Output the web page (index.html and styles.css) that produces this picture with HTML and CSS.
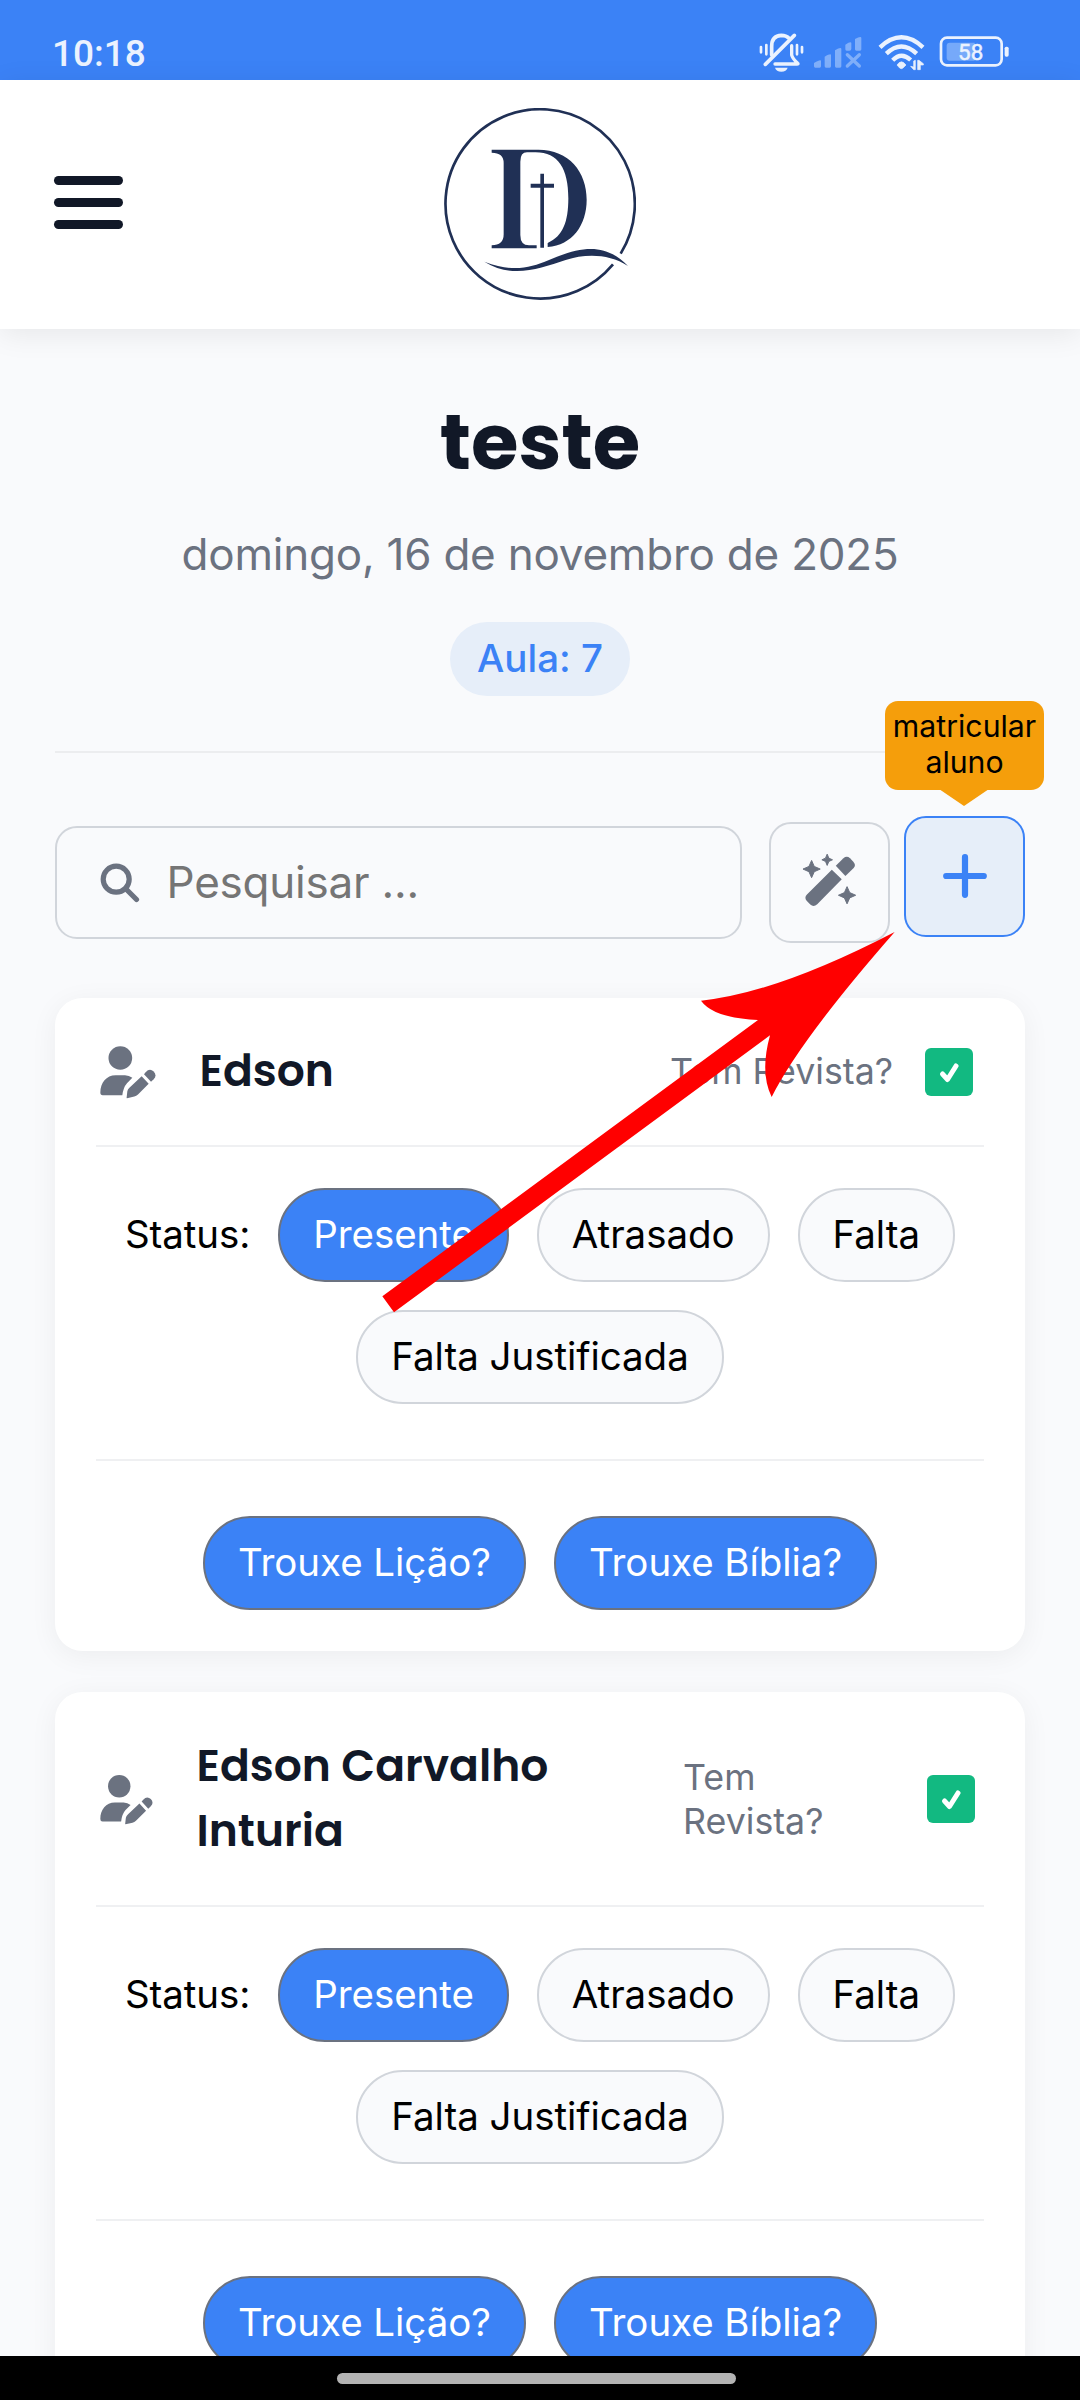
FILE: index.html
```html
<!DOCTYPE html>
<html lang="pt-BR">
<head>
<meta charset="utf-8">
<title>teste</title>
<link rel="stylesheet" href="styles.css">
</head>
<body>
<svg class="symbols" aria-hidden="true">
  <symbol id="user-pen" viewBox="181 199 168 158">
    <circle cx="242" cy="234.5" r="35.5"/>
    <path d="M182 338C182 309 200 286 228 286H256Q268 287 278 294L262 310Q251 322 248 346H189Q182 346 182 338z"/>
    <path d="M306 289L327 312L295 344Q290 349 284 350L262 355Q260 355 261 352L263 334Q264 328 270 323z"/>
    <path d="M313 283L318 277Q330 264 342 275Q353 287 342 298L334 306z"/>
  </symbol>
  <symbol id="check" viewBox="0 0 48 48"><path d="M17.5 26L22.5 31.5L31 18" fill="none" stroke="#fff" stroke-width="5" stroke-linecap="round" stroke-linejoin="round"/></symbol>
</svg>
<div class="screen">
  <div class="statusbar">
    <span class="clock">10:18</span>
    <svg class="status-icons" width="252" height="40" viewBox="118 100 756 120" fill="#ebf2fe">
      <g fill="none" stroke="#ebf2fe" stroke-linecap="round">
        <path d="M156 166V140Q156 108 185 107Q200 107 208 116" stroke-width="11"/>
        <path d="M216 138V166Q218 176 234 191Q237 193 232 193H166" stroke-width="10"/>
        <path d="M137 194L224 107" stroke-width="11"/>
        <path d="M140 136V164M124 142V158M232 136V164M247 142V158" stroke-width="8"/>
      </g>
      <path d="M166 204H204Q200 216 185 216Q170 216 166 204z"/>
      <g fill="#80affa">
        <path d="M283 190Q304 178 304 184V200Q304 204 300 204H287Q283 204 283 200zM315 171Q334 160 334 166V200Q334 204 330 204H319Q315 204 315 200zM346 152Q365 140 365 148V200Q365 204 361 204H350Q346 204 346 200zM377 135Q395 123 395 131V147Q395 153 389 153H381Q377 153 377 149zM406 118Q425 107 425 115V149Q425 153 421 153H410Q406 153 406 149z"/>
        <path d="M383 165L419 199M419 165L383 199" stroke="#80affa" stroke-width="10" stroke-linecap="round"/>
      </g>
      <g fill="none" stroke="#ebf2fe" stroke-width="13">
        <path d="M481 143Q545 83 610 143"/><path d="M500 162Q545 119 591 162"/><path d="M519 182Q545 155 573 181"/>
      </g>
      <path d="M532 196Q545 177 559 196L550 205Q545 209 540 205zM582 184V202L573 200L582 210H587V182zM594 210V182L598 182L611 192V196H602V210z" stroke="#ebf2fe" stroke-width="2"/>
      <rect x="664" y="114" width="182" height="83" rx="18" fill="none" stroke="#ebf2fe" stroke-width="8"/>
      <path d="M690 129H765V183H690Q681 183 681 174V138Q681 129 690 129z" fill="#76a9fa"/>
      <rect x="855" y="141" width="12" height="30" rx="5"/>
      <text class="battery-level" x="715" y="182" textLength="76">58</text>
    </svg>
  </div>
  <header class="topbar">
    <div class="menu"><i></i><i></i><i></i></div>
    <svg class="logo" width="194" height="196" viewBox="129 79 582 588" fill="#203055">
      <path d="M665 516A284 284 0 1 0 642 548" fill="none" stroke="#203055" stroke-width="8"/>
      <path d="M278 204H418C510 204 563 270 563 354C563 430 520 490 446 496V484C492 464 508 420 508 350C508 262 478 212 410 212H384Q364 212 364 240V460Q364 491 390 491H413V500H278V491Q314 491 314 458V244Q314 213 278 213z"/>
      <path d="M424 276H435V306H465V318H435V498H424V318H395V306H424z"/>
      <path d="M256 540C340 572 390 560 450 535C550 492 620 484 687 553C630 516 560 516 500 535C420 561 340 592 256 540z"/>
    </svg>
  </header>
  <main class="content">
    <h1 class="title">teste</h1>
    <p class="date">domingo, 16 de novembro de 2025</p>
    <span class="lesson">Aula: 7</span>
    <hr class="rule">
    <div class="toolbar">
      <div class="search">
        <svg width="40" height="40" viewBox="0 0 40 40" fill="none" stroke="#6b7280" stroke-width="5.2"><circle cx="16.2" cy="16.2" r="13"/><path d="M25.5 25.5L36.5 36.5" stroke-linecap="round"/></svg>
        <span>Pesquisar ...</span>
      </div>
      <div class="tool wand">
        <svg width="55" height="54" viewBox="185 520 166 162" fill="#6b7280">
          <path d="M275 570L305 599L231 674Q220 684 210 675L199 664Q191 654 200 645z"/>
          <path d="M287 558L310 535Q320 526 330 535L340 546Q349 556 341 565L316 589z"/>
          <g stroke="#6b7280" stroke-width="3" stroke-linejoin="round"><path d="M214 542L222 560L240 568L222 576L214 594L206 576L188 568L206 560z"/><path d="M261 523L266 535L277 540L266 545L261 557L256 545L245 540L256 535z"/><path d="M321 621L329 639L347 647L329 655L321 673L313 655L295 647L313 639z"/></g>
        </svg>
      </div>
      <div class="tool add">
        <svg width="44" height="44" viewBox="0 0 44 44" stroke="#3b82f6" stroke-width="6.2" stroke-linecap="round"><path d="M22 3.2V40.8M3.2 22H40.8"/></svg>
        <div class="tooltip">matricular<br>aluno</div>
      </div>
    </div>

    <section class="card">
      <div class="card-head">
        <svg class="person" width="56" height="53"><use href="#user-pen"/></svg>
        <h2 class="name">Edson</h2>
        <span class="magazine">Tem Revista?</span>
        <svg class="check" width="48" height="48"><use href="#check"/></svg>
      </div>
      <div class="options">
        <span class="label">Status:</span>
        <span class="pill on">Presente</span><span class="pill">Atrasado</span><span class="pill">Falta</span><span class="pill">Falta Justificada</span>
      </div>
      <div class="options brought"><span class="pill on">Trouxe Lição?</span><span class="pill on">Trouxe Bíblia?</span></div>
    </section>

    <section class="card">
      <div class="card-head tall">
        <svg class="person" width="53" height="50"><use href="#user-pen"/></svg>
        <h2 class="name">Edson Carvalho<br>Inturia</h2>
        <span class="magazine">Tem<br>Revista?</span>
        <svg class="check" width="48" height="48"><use href="#check"/></svg>
      </div>
      <div class="options">
        <span class="label">Status:</span>
        <span class="pill on">Presente</span><span class="pill">Atrasado</span><span class="pill">Falta</span><span class="pill">Falta Justificada</span>
      </div>
      <div class="options brought"><span class="pill on">Trouxe Lição?</span><span class="pill on">Trouxe Bíblia?</span></div>
    </section>
  </main>
  <div class="navbar"><i class="handle"></i></div>
  <svg class="arrow" width="514" height="384" viewBox="-538 154 1542 1152"><path d="M1003 157Q650 340 422 363Q460 415 593 421L-534 1250L-499 1298L629 467Q598 580 634 652Q720 480 1003 157z" fill="#f00"/></svg>
</div>
</body>
</html>
```
FILE: styles.css
```css
* { box-sizing: border-box; }
body { margin: 0; font-family: Inter, "Liberation Sans", sans-serif; color: #000; }
h1, h2, p { margin: 0; }
svg { display: block; flex: none; }
.symbols { position: absolute; width: 0; height: 0; }
.screen { position: relative; width: 1080px; height: 2400px; overflow: hidden; display: flex; flex-direction: column; background: #f9fafc; }

.statusbar { height: 80px; flex: none; background: #3b82f6; display: flex; justify-content: space-between; padding: 33px 69px 0 52px; }
.clock { font: 500 37px/42px Roboto, sans-serif; color: #ebf2fe; }
.battery-level { font: 400 67px Roboto, sans-serif; stroke: #ebf2fe; stroke-width: 1.5px; }

.topbar { position: relative; z-index: 1; height: 249px; flex: none; background: #fff; display: grid; grid-template-columns: 1fr auto 1fr; align-items: center; padding: 0 55px 0 54px; box-shadow: 0 5px 28px rgba(0, 0, 0, .08); }
.menu { width: 69px; display: grid; gap: 13px; margin-top: -4px; }
.menu i { height: 9px; border-radius: 5px; background: #111827; }
.logo { margin: 2px 1px 0 -1px; }

.content { flex: 1; min-height: 0; overflow: hidden; padding: 71px 55px 0; display: flex; flex-direction: column; align-items: center; }
.title { font: 700 77px/84px Poppins, Inter, sans-serif; color: #111827; }
.date { margin-top: 40px; font-size: 44px; line-height: 60px; letter-spacing: -.22px; color: #6b7280; white-space: nowrap; }
.lesson { margin-top: 38px; height: 74px; flex: none; padding: 0 27.5px; border-radius: 37px; background: #e6eef9; color: #3b82f6; font-size: 38.5px; font-weight: 500; line-height: 73px; }
.rule { width: 100%; height: 2px; flex: none; border: 0; margin: 55px 0 69px; background: #ecedef; }

.toolbar { width: 100%; flex: none; display: flex; align-items: center; }
.search { flex: 1; height: 113px; margin-right: 27px; border: 2px solid #d1d5db; border-radius: 22px; padding-left: 43px; display: flex; align-items: center; gap: 26.5px; font-size: 44px; letter-spacing: -.22px; color: #757575; }
.search span { margin-top: -2px; }
.tool { width: 121px; height: 121px; border: 2px solid #d1d5db; border-radius: 22px; display: flex; align-items: center; justify-content: center; }
.wand { margin-right: 14px; }
.wand svg { margin-top: -5px; }
.add { position: relative; transform: translateY(-6px); border-color: #3b82f6; background: #e6eef9; }
.add svg { margin-top: -2px; }
.tooltip { position: absolute; left: -21px; bottom: 145px; width: 159px; height: 89px; padding-top: 7px; border-radius: 13px; background: #f59e0b; font-size: 30.25px; line-height: 36px; text-align: center; }
.tooltip::after { content: ""; position: absolute; left: 54px; top: 88px; border: 25px solid transparent; border-top: 17px solid #f59e0b; border-bottom: 0; }

.card { width: 100%; flex: none; margin-top: 55px; padding: 0 41px 41px; border-radius: 27.5px; background: #fff; box-shadow: 0 5px 28px rgba(0, 0, 0, .055); }
.card + .card { margin-top: 41px; }
.card-head { height: 149px; border-bottom: 2px solid #eff0f2; display: flex; align-items: center; padding: 0 11px 0 4px; }
.person { fill: #6b7280; margin-top: 2px; }
.name { margin: -2px 0 0 43.5px; font: 600 44px/65px Poppins, Inter, sans-serif; color: #111827; white-space: nowrap; }
.magazine { margin: -2px 0 0 auto; font-size: 35.75px; line-height: 44px; color: #6b7280; white-space: nowrap; }
.check { margin-left: 32px; border-radius: 6px; background: #12b981; }
.tall { height: 215px; padding-right: 9px; }
.tall .magazine { width: 212px; margin-top: 0; }

.options { display: flex; flex-wrap: wrap; align-items: center; justify-content: center; gap: 28px; padding: 41px 0 55px; font-size: 38.5px; }
.label { margin-top: -2px; letter-spacing: -.1px; }
.pill { height: 94px; border: 2px solid #d1d5db; border-radius: 47px; padding: 0 33px; line-height: 89px; letter-spacing: -.05px; background: #f9fafc; white-space: nowrap; }
.pill.on { border-color: #6b7280; background: #3b82f6; color: #fff; }
.brought { border-top: 2px solid #eff0f2; padding: 55px 0 0; }

.navbar { height: 44px; flex: none; background: #000; display: flex; justify-content: center; padding: 17px 7px 0 0; }
.handle { width: 399px; height: 11px; border-radius: 5.5px; background: #b3b3b3; }
.arrow { position: absolute; left: 380.67px; top: 931.33px; z-index: 2; }
```
